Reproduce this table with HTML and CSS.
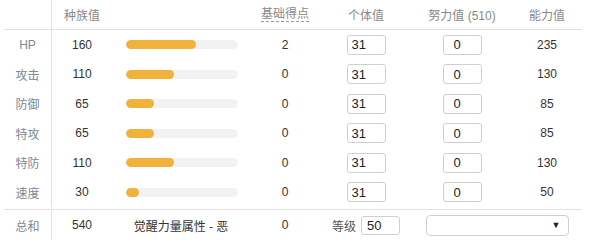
FILE: index.html
```html
<!DOCTYPE html>
<html lang="zh">
<head>
    <meta charset="UTF-8">
    <meta name="viewport" content="width=device-width, initial-scale=1.0">
    <title>能力值计算</title>
    <link rel="stylesheet" href="styles.css">
</head>
<body>
    <div class="stats">
        <div class="row head">
            <div class="cell name"></div>
            <div class="cell">种族值</div>
            <div class="cell"></div>
            <div class="cell"><span class="hint">基础得点</span></div>
            <div class="cell">个体值</div>
            <div class="cell">努力值 (510)</div>
            <div class="cell">能力值</div>
        </div>

        <div class="body">
            <div class="row">
                <div class="cell name">HP</div>
                <div class="cell">160</div>
                <div class="cell"><div class="bar"><div class="fill" style="width: 70px"></div></div></div>
                <div class="cell">2</div>
                <div class="cell"><input class="iv" value="31"></div>
                <div class="cell"><input class="ev" value="0"></div>
                <div class="cell">235</div>
            </div>
            <div class="row">
                <div class="cell name">攻击</div>
                <div class="cell">110</div>
                <div class="cell"><div class="bar"><div class="fill" style="width: 48px"></div></div></div>
                <div class="cell">0</div>
                <div class="cell"><input class="iv" value="31"></div>
                <div class="cell"><input class="ev" value="0"></div>
                <div class="cell">130</div>
            </div>
            <div class="row">
                <div class="cell name">防御</div>
                <div class="cell">65</div>
                <div class="cell"><div class="bar"><div class="fill" style="width: 28px"></div></div></div>
                <div class="cell">0</div>
                <div class="cell"><input class="iv" value="31"></div>
                <div class="cell"><input class="ev" value="0"></div>
                <div class="cell">85</div>
            </div>
            <div class="row">
                <div class="cell name">特攻</div>
                <div class="cell">65</div>
                <div class="cell"><div class="bar"><div class="fill" style="width: 28px"></div></div></div>
                <div class="cell">0</div>
                <div class="cell"><input class="iv" value="31"></div>
                <div class="cell"><input class="ev" value="0"></div>
                <div class="cell">85</div>
            </div>
            <div class="row">
                <div class="cell name">特防</div>
                <div class="cell">110</div>
                <div class="cell"><div class="bar"><div class="fill" style="width: 48px"></div></div></div>
                <div class="cell">0</div>
                <div class="cell"><input class="iv" value="31"></div>
                <div class="cell"><input class="ev" value="0"></div>
                <div class="cell">130</div>
            </div>
            <div class="row">
                <div class="cell name">速度</div>
                <div class="cell">30</div>
                <div class="cell"><div class="bar"><div class="fill" style="width: 13px"></div></div></div>
                <div class="cell">0</div>
                <div class="cell"><input class="iv" value="31"></div>
                <div class="cell"><input class="ev" value="0"></div>
                <div class="cell">50</div>
            </div>
        </div>

        <div class="row total">
            <div class="cell name">总和</div>
            <div class="cell">540</div>
            <div class="cell">觉醒力量属性 - 恶</div>
            <div class="cell">0</div>
            <div class="cell level">等级 <input class="lv" value="50"></div>
            <div class="cell wide">
                <div class="select"><span class="caret">▼</span></div>
            </div>
        </div>
    </div>
</body>
</html>
```

FILE: styles.css
```css
body {
    margin: 0;
    font-family: "Liberation Sans", "Noto Sans CJK SC", sans-serif;
    font-size: 12px;
    color: #333;
    background: #fff;
}

.stats {
    padding: 0 18px 0 4px;
}

.row {
    display: grid;
    grid-template-columns: 48px 60px 138px 70px 92px 100px 70px;
    height: 29.5px;
}

.cell {
    display: flex;
    align-items: center;
    justify-content: center;
}

.cell.name {
    border-right: 1px solid #e2e2e2;
    color: #7d8893;
}

.row.head {
    height: 29px;
    border-bottom: 1px solid #e2e2e2;
    color: #888;
}

.hint {
    border-bottom: 1px dashed #999;
    line-height: 14px;
}

.body {
    padding-bottom: 2px;
    border-bottom: 1px solid #e2e2e2;
}

.row.total {
    height: 30px;
}

/* base stat bar, max 255 */
.cell .bar {
    width: 112px;
    height: 9px;
    margin-left: 14px;
    margin-right: auto;
    border-radius: 5px;
    background: #f2f2f2;
    overflow: hidden;
}

.fill {
    height: 100%;
    border-radius: 5px;
    background: #f0b23a;
}

input {
    box-sizing: border-box;
    width: 39px;
    height: 20px;
    border: 1px solid #cfcfcf;
    border-radius: 3px;
    font-family: inherit;
    font-size: 13px;
    color: #222;
    padding: 0 4px;
    outline: none;
}

input.ev {
    padding-left: 10px;
}

.level {
    gap: 5px;
    color: #555;
}

.level .lv {
    height: 19px;
    padding-left: 5px;
}

.wide {
    grid-column: span 2;
}

.select {
    box-sizing: border-box;
    width: 143px;
    height: 21px;
    border: 1px solid #cfcfcf;
    border-radius: 4px;
    display: flex;
    align-items: center;
    justify-content: flex-end;
    padding-right: 7px;
}

.caret {
    font-size: 9px;
    color: #222;
}
```
